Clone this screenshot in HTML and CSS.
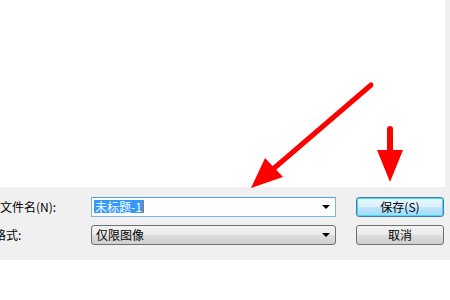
FILE: index.html
```html
<html>
    <head>
        <title>存储为</title>
        <link rel="stylesheet" href="styles.css">
    </head>
    <body>
        <div class="browser">
            <div class="files"></div>
            <div class="edge"></div>
        </div>
        <div class="panel">
            <div class="row">
                <span class="label">文件名(<u>N</u>):</span>
                <div class="combo edit">
                    <span class="value"><span class="selected">未标题-1</span><span class="caret"></span></span>
                    <span class="drop"></span>
                </div>
                <button class="btn default">保存(<u>S</u>)</button>
            </div>
            <div class="row">
                <span class="label cut">格式:</span>
                <div class="combo list">
                    <span class="value">仅限图像</span>
                    <span class="drop"></span>
                </div>
                <button class="btn">取消</button>
            </div>
        </div>
        <div class="bottom"></div>

        <svg class="arrows" width="450" height="300" viewBox="0 0 450 300">
            <line x1="371" y1="85" x2="272" y2="170" stroke="#ff0000" stroke-width="5" stroke-linecap="round" />
            <polygon points="251,188 265,158 283,177" fill="#ff0000" />
            <line x1="390" y1="129" x2="390" y2="152" stroke="#ff0000" stroke-width="6" stroke-linecap="round" />
            <polygon points="377,150 403,150 390,182" fill="#ff0000" />
        </svg>
    </body>
</html>
```

FILE: styles.css
```css
body {
    margin: 0;
    width: 450px;
    height: 300px;
    overflow: hidden;
    background: #ffffff;
    font-family: "Noto Sans CJK SC", "DejaVu Sans", sans-serif;
    font-size: 12px;
    color: #000000;
    position: relative;
}

.browser {
    display: flex;
    height: 187px;
}

.files {
    flex: 1;
    background: #ffffff;
}

.edge {
    width: 5px;
    background: #f0f0f0;
}

.panel {
    background: #f0f0f0;
    height: 73px;
    box-sizing: border-box;
    padding-top: 9px;
    display: flex;
    flex-direction: column;
    row-gap: 7px;
}

.row {
    display: flex;
    align-items: center;
    height: 21px;
}

.label {
    width: 91px;
    line-height: 21px;
    white-space: nowrap;
    overflow: hidden;
}

.label u {
    text-decoration: none;
}

.cut {
    text-indent: -6px;
}

.combo {
    width: 245px;
    height: 20px;
    box-sizing: border-box;
    display: flex;
    align-items: center;
    justify-content: space-between;
    padding: 0 5px 0 2px;
}

.edit {
    background: #ffffff;
    border: 1px solid #7eb4ea;
    border-top-color: #569de5;
}

.list {
    border: 1px solid #707070;
    border-radius: 3px;
    background: linear-gradient(#f2f2f2, #ebebeb 50%, #dddddd 51%, #cfcfcf);
    padding-left: 4px;
}

.value {
    display: flex;
    align-items: center;
    line-height: 13px;
}

.selected {
    background: #3399ff;
    color: #ffffff;
    padding: 0 1px;
}

.caret {
    width: 1px;
    height: 13px;
    background: #cc6633;
}

.drop {
    width: 0;
    height: 0;
    border-left: 4px solid transparent;
    border-right: 4px solid transparent;
    border-top: 4px solid #000000;
}

.btn {
    margin-left: 20px;
    width: 88px;
    height: 20px;
    box-sizing: border-box;
    padding: 0;
    font-family: inherit;
    font-size: 12px;
    color: #000000;
    border: 1px solid #707070;
    border-radius: 3px;
    background: linear-gradient(#f2f2f2, #ebebeb 50%, #dddddd 51%, #cfcfcf);
}

.btn u {
    text-decoration: none;
}

.default {
    border-color: #3c7fb1;
    box-shadow: inset 0 0 0 1px #48d8f8;
    background: linear-gradient(#eaf6fd, #d9f0fc 50%, #bee6fd 51%, #a7d9f5);
}

.bottom {
    height: 40px;
}

.arrows {
    position: absolute;
    left: 0;
    top: 0;
    pointer-events: none;
}
```
